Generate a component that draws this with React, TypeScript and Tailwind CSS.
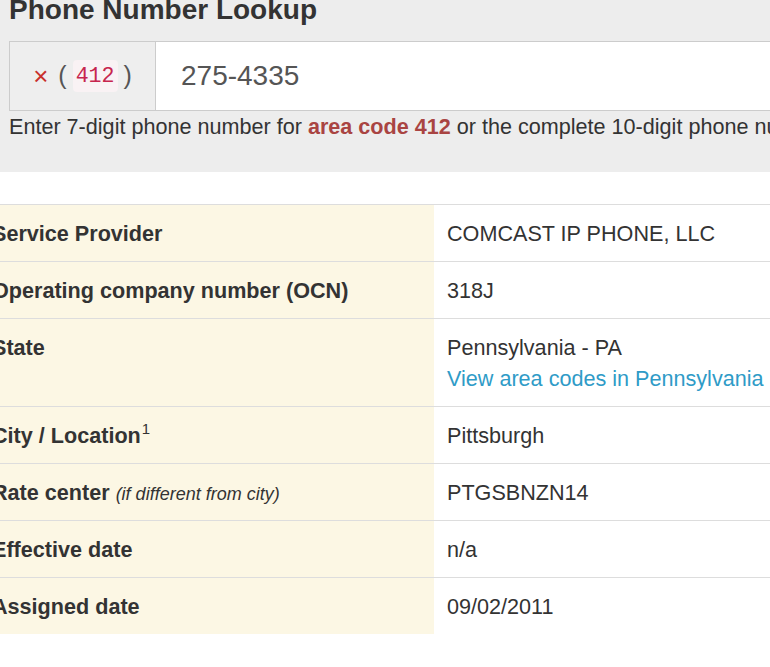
const rows: { label: React.ReactNode; value: React.ReactNode }[] = [
  { label: "Service Provider", value: "COMCAST IP PHONE, LLC" },
  { label: "Operating company number (OCN)", value: "318J" },
  {
    label: "State",
    value: (
      <>
        <div>Pennsylvania - PA</div>
        <a href="#" className="text-[#2f9bc7]">View area codes in Pennsylvania</a>
      </>
    ),
  },
  {
    label: (
      <>
        City / Location<sup className="relative -top-[9px] ml-[1px] text-[15px] font-normal leading-none">1</sup>
      </>
    ),
    value: "Pittsburgh",
  },
  {
    label: (
      <>
        Rate center <i className="text-[18px] font-normal leading-none">(if different from city)</i>
      </>
    ),
    value: "PTGSBNZN14",
  },
  { label: "Effective date", value: "n/a" },
  { label: "Assigned date", value: "09/02/2011" },
];

export default function App() {
  return (
    <div className="min-h-[667px] w-[770px] overflow-hidden bg-white font-['Liberation_Sans',Arial,sans-serif] text-[#333]">
      <div className="flex h-[172px] flex-col bg-[#ededed] px-[9px]">
        <h1 className="-mt-[7px] text-[28px] font-bold leading-[34px] text-[#333]">Phone Number Lookup</h1>
        <div className="mt-[14px] flex h-[70px] w-[900px] border border-[#cccccc]">
          <div className="flex w-[146px] items-center justify-center gap-[10px] border-r border-[#cccccc] bg-[#eeeeee] text-[25px] text-[#555]">
            <span className="text-[26px] leading-none text-[#c9302c]">×</span>
            <span className="flex items-center gap-[6px]">
              <span>(</span>
              <code className="rounded bg-[#f9f2f4] px-[3px] font-['Liberation_Mono',monospace] text-[21.6px] text-[#c7254e]">412</code>
              <span>)</span>
            </span>
          </div>
          <div className="flex flex-1 items-center bg-white pl-[25px] text-[28px] text-[#555]">275-4335</div>
        </div>
        <p className="whitespace-nowrap text-[21.6px] leading-[31px]">
          Enter 7-digit phone number for <b className="text-[#a94442]">area code 412</b> or the complete 10-digit phone number
        </p>
      </div>
      <div className="-ml-[21px] mt-[32px] w-[900px] border-t border-[#dddddd] text-[21.6px] leading-[31px]">
        {rows.map((r, i) => (
          <div key={i} className={`flex ${i < rows.length - 1 ? "border-b border-[#dddddd]" : ""}`}>
            <div className="w-[455px] shrink-0 whitespace-nowrap bg-[#fcf7e4] px-[13px] py-[12.5px] font-bold">{r.label}</div>
            <div className="flex-1 px-[13px] py-[12.5px]">{r.value}</div>
          </div>
        ))}
      </div>
    </div>
  );
}
